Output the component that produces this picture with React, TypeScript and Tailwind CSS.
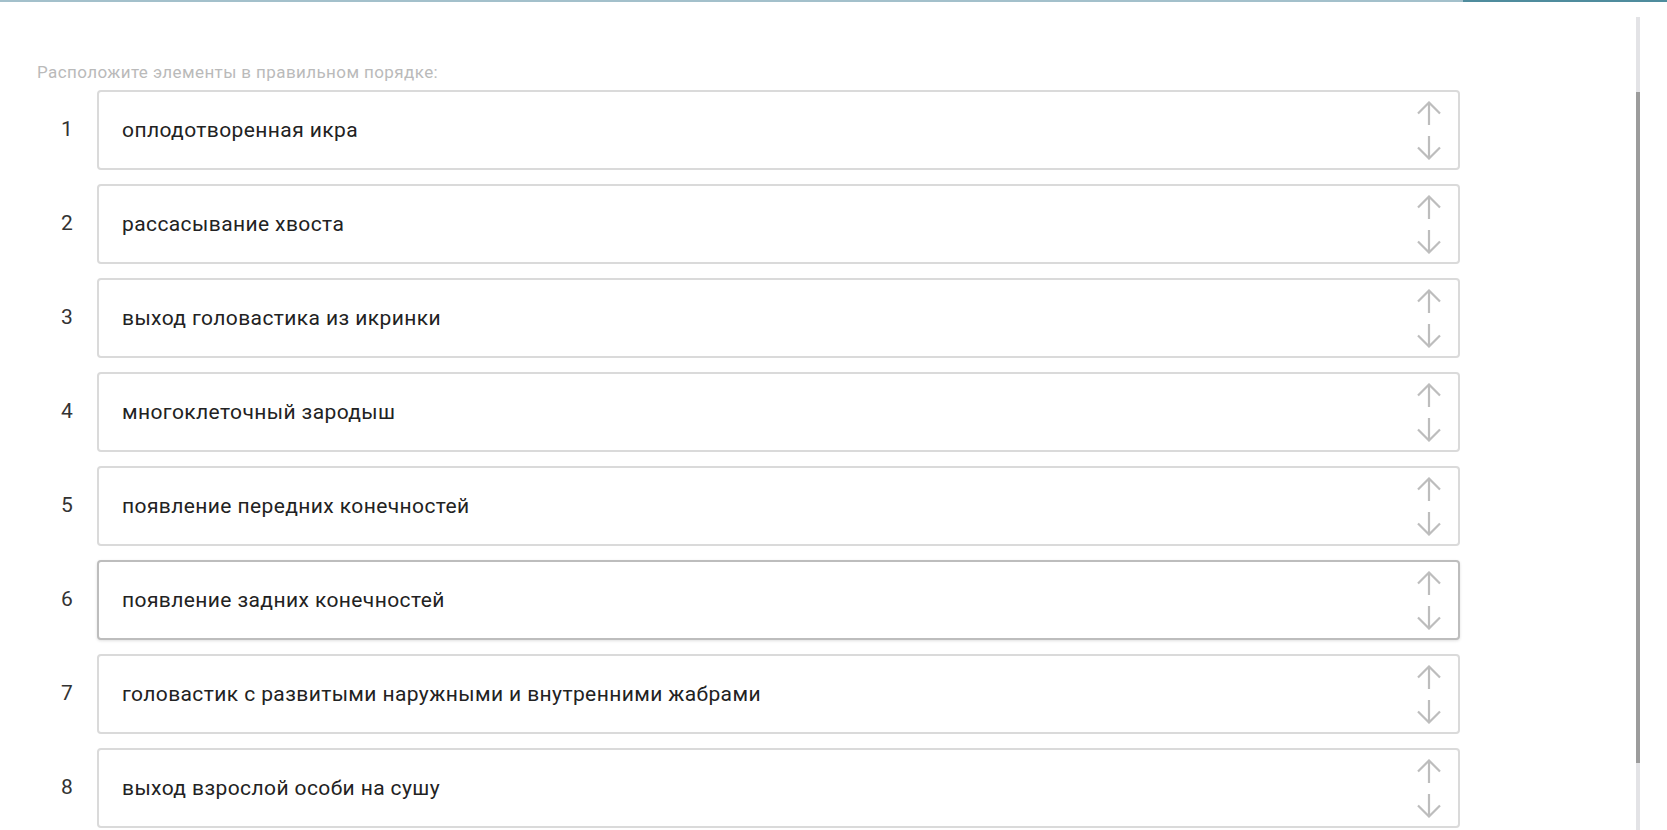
import React from 'react';

const items = [
  'оплодотворенная икра',
  'рассасывание хвоста',
  'выход головастика из икринки',
  'многоклеточный зародыш',
  'появление передних конечностей',
  'появление задних конечностей',
  'головастик с развитыми наружными и внутренними жабрами',
  'выход взрослой особи на сушу',
];

const Arrow: React.FC<{ down?: boolean }> = ({ down }) => (
  <svg width="24" height="24" viewBox="0 0 24 24" fill="none" stroke="#bdbdbd" strokeWidth="2.2" className={down ? 'rotate-180' : ''}>
    <path d="M1 12.5 L12 1.5 L23 12.5 M12 1.5 V24" />
  </svg>
);

const App: React.FC = () => {
  return (
    <div className="h-[830px] w-full overflow-hidden bg-white flex flex-col font-['Roboto',sans-serif]">
      {/* progress line */}
      <div className="flex h-[2px] shrink-0">
        <div className="w-[1463px] bg-[#a3c0cb]" />
        <div className="flex-1 bg-[#4f8c9d]" />
      </div>

      <div className="flex flex-1 min-h-0">
        <div className="w-[1636px] pl-[37px] pt-[60px]">
          <p className="text-[17px] leading-[20px] tracking-[0.4px] text-[#bababa]">Расположите элементы в правильном порядке:</p>
          <ol className="mt-[8px] flex flex-col gap-[14px]">
            {items.map((text, i) => (
              <li key={i} className="flex h-[80px] shrink-0">
                <div className="w-[60px] flex items-center justify-center text-[21px] text-[#333]">{i + 1}</div>
                <div
                  className={`w-[1363px] flex items-center justify-between rounded-[4px] border-2 bg-white pl-[23px] pr-[17px] ${
                    i === 5 ? 'border-[#bdbdbd] shadow-[0_1px_3px_rgba(0,0,0,0.12)]' : 'border-[#dadada]'
                  }`}
                >
                  <span className="pt-[2px] text-[21px] tracking-[0.4px] text-[#222]">{text}</span>
                  <div className="flex flex-col gap-[11px]">
                    <Arrow />
                    <Arrow down />
                  </div>
                </div>
              </li>
            ))}
          </ol>
        </div>

        {/* scrollbar */}
        <div className="w-[4px] pt-[15px] flex flex-col">
          <div className="flex-1 bg-[#e3e3e6] flex flex-col">
            <div className="mt-[75px] h-[671px] bg-[#9c9c9c]" />
          </div>
        </div>
      </div>
    </div>
  );
};

export default App;
